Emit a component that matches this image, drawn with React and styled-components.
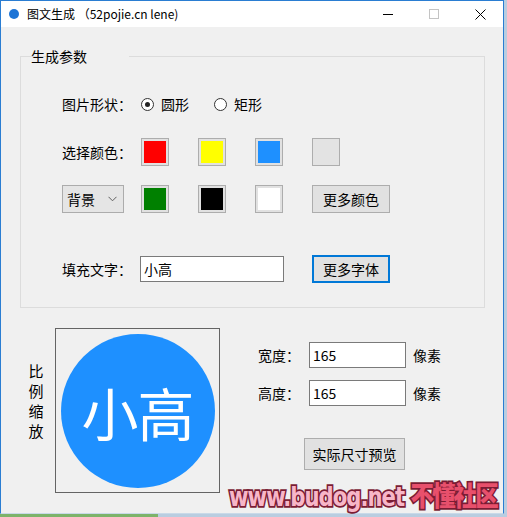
import React from 'react'
import styled, { createGlobalStyle } from 'styled-components'

const Global = createGlobalStyle`
    html, body {
        margin: 0;
        padding: 0;
    }
    body {
        font-family: "Noto Sans CJK SC", "Noto Sans", sans-serif;
        font-size: 14px;
        color: #000;
    }
`

function App() {
    return (
        <Desktop>
            <Global />
            <Window>
                <TitleBar>
                    <AppDot />
                    <Title>图文生成 （52pojie.cn lene)</Title>
                    <Controls>
                        <CtrlButton>
                            <svg width="10" height="10" viewBox="0 0 10 10">
                                <path d="M0 5.5h10" stroke="#000" strokeWidth="1" />
                            </svg>
                        </CtrlButton>
                        <CtrlButton>
                            <svg width="10" height="10" viewBox="0 0 10 10">
                                <rect x="0.5" y="0.5" width="9" height="9" fill="none" stroke="#c4c4c4" />
                            </svg>
                        </CtrlButton>
                        <CtrlButton>
                            <svg width="11" height="11" viewBox="0 0 11 11">
                                <path d="M0.5 0.5l10 10M10.5 0.5l-10 10" stroke="#000" strokeWidth="1" />
                            </svg>
                        </CtrlButton>
                    </Controls>
                </TitleBar>

                <Body>
                    <Group>
                        <Legend>生成参数</Legend>

                        <Row $top={25}>
                            <Lead>图片形状：</Lead>
                            <Option $width={73}>
                                <Radio $checked />
                                <span>圆形</span>
                            </Option>
                            <Option>
                                <Radio />
                                <span>矩形</span>
                            </Option>
                        </Row>

                        <Row $top={20}>
                            <Lead>选择颜色：</Lead>
                            <Swatches>
                                <Swatch $color="#ff0000" />
                                <Swatch $color="#ffff00" />
                                <Swatch $color="#1e90ff" />
                                <Swatch $color="#e3e3e3" $plain />
                            </Swatches>
                        </Row>

                        <Row $top={19}>
                            <Lead>
                                <Combo>
                                    <span>背景</span>
                                    <svg width="9" height="6" viewBox="0 0 9 6">
                                        <path d="M0.5 0.8l4 4 4-4" fill="none" stroke="#606060" />
                                    </svg>
                                </Combo>
                            </Lead>
                            <Swatches>
                                <Swatch $color="#008000" />
                                <Swatch $color="#000000" />
                                <Swatch $color="#ffffff" />
                                <Button $w={78} $h={28}>更多颜色</Button>
                            </Swatches>
                        </Row>

                        <Row $top={42}>
                            <Lead $w={78}>填充文字：</Lead>
                            <TextBox $w={144} value="小高" readOnly />
                            <FontButton $w={78} $h={28} $focus>更多字体</FontButton>
                        </Row>
                    </Group>

                    <Preview>
                        <VerticalLabel>
                            <span>比</span>
                            <span>例</span>
                            <span>缩</span>
                            <span>放</span>
                        </VerticalLabel>
                        <Canvas>
                            <Circle>小高</Circle>
                        </Canvas>
                        <SizePanel>
                            <SizeRow $top={14}>
                                <SizeLabel>宽度：</SizeLabel>
                                <TextBox $w={97} value="165" readOnly />
                                <Unit>像素</Unit>
                            </SizeRow>
                            <SizeRow $top={12}>
                                <SizeLabel>高度：</SizeLabel>
                                <TextBox $w={97} value="165" readOnly />
                                <Unit>像素</Unit>
                            </SizeRow>
                            <PreviewButton $w={101} $h={32}>实际尺寸预览</PreviewButton>
                        </SizePanel>
                    </Preview>
                </Body>

                <Watermark>
                    www.budog.net <Red>不懂社区</Red>
                </Watermark>
            </Window>
        </Desktop>
    )
}

export default App

const Desktop = styled.div`
    width: 507px;
    height: 517px;
    overflow: hidden;
    background: linear-gradient(to right, #7db36a 0 158px, #b9cde0 158px);
    display: flex;
    align-items: flex-start;
`
const Window = styled.div`
    position: relative;
    width: 504px;
    height: 514px;
    box-sizing: border-box;
    border: 1px solid #2a7dd2;
    border-bottom-color: #c9d9e8;
    background: #f0f0f0;
    display: flex;
    flex-direction: column;
`
const TitleBar = styled.div`
    height: 26px;
    flex-shrink: 0;
    background: #ffffff;
    display: flex;
    align-items: center;
`
const AppDot = styled.div`
    width: 10px;
    height: 10px;
    border-radius: 50%;
    background: #1c74d6;
    margin-left: 8px;
    margin-right: 8px;
`
const Title = styled.div`
    font-size: 12px;
    line-height: 16px;
    flex: 1;
    white-space: pre;
`
const Controls = styled.div`
    display: flex;
    height: 100%;
`
const CtrlButton = styled.div`
    width: 46px;
    height: 100%;
    display: flex;
    align-items: center;
    justify-content: center;
`
const Body = styled.div`
    flex: 1;
    padding: 20px 0 0 19px;
`
const Group = styled.fieldset`
    margin: 0;
    width: 465px;
    box-sizing: border-box;
    border: 1px solid #dcdcdc;
    padding: 0 0 24px 41px;
    min-inline-size: 0;
`
const Legend = styled.legend`
    margin-left: 9px;
    padding: 0 1px;
    font-size: 14px;
    line-height: 18px;
    transform: translateX(-41px);
`
const Row = styled.div`
    display: flex;
    align-items: center;
    height: 28px;
    margin-top: ${p => p.$top}px;
`
const Lead = styled.div`
    width: ${p => p.$w || 79}px;
    flex-shrink: 0;
    white-space: nowrap;
`
const Option = styled.label`
    display: flex;
    align-items: center;
    gap: 7px;
    width: ${p => (p.$width ? p.$width + 'px' : 'auto')};
`
const Radio = styled.span`
    width: 13px;
    height: 13px;
    box-sizing: border-box;
    border-radius: 50%;
    border: 1px solid #333;
    background: #fff;
    display: flex;
    align-items: center;
    justify-content: center;

    &::after {
        content: '';
        width: 5px;
        height: 5px;
        border-radius: 50%;
        background: ${p => (p.$checked ? '#222' : 'transparent')};
    }
`
const Swatches = styled.div`
    display: flex;
    gap: 29px;
`
const Swatch = styled.div`
    width: 28px;
    height: 28px;
    box-sizing: border-box;
    border: 1px solid #adadad;
    padding: ${p => (p.$plain ? 0 : 2)}px;
    background: ${p => (p.$plain ? p.$color : '#e1e1e1')};

    &::after {
        content: '';
        display: block;
        width: 100%;
        height: 100%;
        background: ${p => p.$color};
    }
`
const Combo = styled.div`
    width: 62px;
    height: 28px;
    box-sizing: border-box;
    border: 1px solid #acacac;
    background: #e5e5e5;
    display: flex;
    align-items: center;
    justify-content: space-between;
    padding: 0 6px 0 4px;
`
const Button = styled.div`
    width: ${p => p.$w}px;
    height: ${p => p.$h}px;
    box-sizing: border-box;
    border: ${p => (p.$focus ? '2px solid #0078d7' : '1px solid #adadad')};
    background: #e1e1e1;
    display: flex;
    align-items: center;
    justify-content: center;
    flex-shrink: 0;
`
const FontButton = styled(Button)`
    margin-left: 28px;
`
const TextBox = styled.input`
    width: ${p => p.$w}px;
    height: 26px;
    box-sizing: border-box;
    border: 1px solid #7a7a7a;
    background: #fff;
    font: inherit;
    font-size: 14px;
    padding: 0 3px;
    outline: none;
    color: #000;
`
const Preview = styled.div`
    display: flex;
    align-items: flex-start;
    margin-top: 20px;
`
const VerticalLabel = styled.div`
    display: flex;
    flex-direction: column;
    width: 16px;
    margin: 33px 11px 0 8px;
    font-size: 15px;
    line-height: 20px;
    text-align: center;
`
const Canvas = styled.div`
    width: 165px;
    height: 165px;
    box-sizing: border-box;
    border: 1px solid #646464;
    display: flex;
    align-items: center;
    justify-content: center;
`
const Circle = styled.div`
    width: 154px;
    height: 154px;
    border-radius: 50%;
    background: #1e90ff;
    color: #fff;
    font-size: 57px;
    font-weight: 400;
    display: flex;
    align-items: center;
    justify-content: center;
    letter-spacing: -1px;
`
const SizePanel = styled.div`
    margin-left: 38px;
    display: flex;
    flex-direction: column;
`
const SizeRow = styled.div`
    display: flex;
    align-items: center;
    margin-top: ${p => p.$top}px;
`
const SizeLabel = styled.div`
    width: 51px;
`
const Unit = styled.div`
    margin-left: 7px;
`
const PreviewButton = styled(Button)`
    margin: 32px 0 0 46px;
`
const Watermark = styled.div`
    position: absolute;
    left: 228px;
    top: 476px;
    font-family: "DejaVu Sans Condensed", "DejaVu Sans", sans-serif;
    font-weight: bold;
    font-size: 24px;
    letter-spacing: -1px;
    color: #f7b6c8;
    -webkit-text-stroke: 3px #7a1c34;
    paint-order: stroke fill;
    white-space: nowrap;
    transform: scale(0.98, 1.12);
    transform-origin: left center;
`
const Red = styled.span`
    color: #e8506c;
    font-family: "Noto Sans CJK SC", sans-serif;
    font-weight: 900;
    letter-spacing: -2px;
`
